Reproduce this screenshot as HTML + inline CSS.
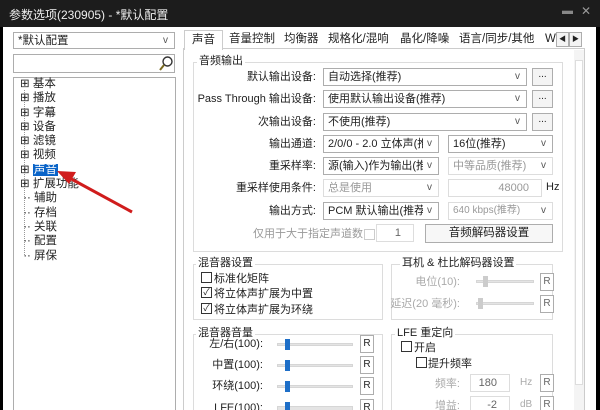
<!DOCTYPE html>
<html style="overflow:hidden;height:410px"><head><meta charset="utf-8"><style>
*{margin:0;padding:0;box-sizing:border-box}
body{width:600px;height:410px;overflow:hidden;background:#000;font-family:"Liberation Sans","Noto Sans CJK SC",sans-serif;font-size:11px;color:#222;position:relative}
.a{position:absolute;white-space:nowrap}
.box{position:absolute;border:1px solid #adadad;background:#fff}
.cb{position:absolute;border:1px solid #adadad;background:#fff;height:18px;font-size:11px;line-height:16px;padding-left:4px;white-space:nowrap;overflow:hidden}
.cb .v{position:absolute;right:0;top:0;font-size:10px;color:#555;background:#fff;padding:0 6px 0 4px}
.dis{color:#999;border-color:#ddd}
.btn{position:absolute;border:1px solid #adadad;background:#f4f4f4;text-align:center;font-size:10px;white-space:nowrap}
.grp{position:absolute;border:1px solid #dcdcdc;border-bottom:none}
.gl{position:absolute;background:#fff;padding:0 2px;font-size:11px;line-height:13px;white-space:nowrap}
.lbl{position:absolute;text-align:right;font-size:11px;line-height:14px;white-space:nowrap}
.chk{position:absolute;width:11px;height:11px;border:1px solid #333;background:#fff;font-size:9px;line-height:9px;text-align:center}
.sl{position:absolute;height:3px;background:#e4e4e4;border:1px solid #d6d6d6}
.th{position:absolute;width:5px;height:11px;background:#1e6fc8}
.thd{background:#ccc}
.r{position:absolute;width:14px;height:18px;border:1px solid #adadad;background:#fff;font-size:10px;text-align:center;line-height:16px}
</style></head><body>
<div class="a" style="left:0;top:0;width:600px;height:27px;background:#1c1c1c"></div>
<div class="a" style="left:9px;top:6px;color:#eee;font-size:12px">参数选项(230905) - *默认配置</div>
<div class="a" style="left:562px;top:5px;color:#888;font-size:11px">▬</div>
<div class="a" style="left:581px;top:4px;color:#999;font-size:12px">✕</div>
<div class="a" style="left:3px;top:27px;width:593px;height:383px;background:#fff"></div>

<div class="cb" style="left:13px;top:32px;width:162px;height:17px;font-size:11.5px">*默认配置<span class="v">v</span></div>
<div class="box" style="left:13px;top:54px;width:162px;height:19px"></div>
<svg class="a" style="left:158px;top:55px" width="16" height="17"><circle cx="9.5" cy="6.5" r="4.5" fill="none" stroke="#333" stroke-width="1.4"/><line x1="6" y1="10" x2="2" y2="15" stroke="#7a6a20" stroke-width="2"/></svg>
<div class="box" style="left:13px;top:77px;width:163px;height:333px;border-bottom:none"></div>
<div class="a" style="left:24px;top:90px;height:165px;border-left:1px dotted #999"></div>
<div style="position:absolute;left:20px;top:77px;font-size:11.5px;line-height:14.3px;white-space:nowrap">
<div>⊞ 基本</div><div>⊞ 播放</div><div>⊞ 字幕</div><div>⊞ 设备</div><div>⊞ 滤镜</div><div>⊞ 视频</div><div>⊞ <span style="background:#0a64c8;color:#fff;padding:0 1px">声音</span></div><div>⊞ 扩展功能</div><div>&nbsp;·· 辅助</div><div>&nbsp;·· 存档</div><div>&nbsp;·· 关联</div><div>&nbsp;·· 配置</div><div>&nbsp;·· 屏保</div>
</div>
<svg class="a" style="left:0;top:0" width="200" height="260"><line x1="132" y1="212" x2="64" y2="175" stroke="#d01c1c" stroke-width="3"/><polygon points="57,171 76,172 69,184" fill="#d01c1c"/></svg>

<div class="a" style="left:183px;top:48px;width:402px;height:362px;border:1px solid #ccc;border-bottom:none;background:#fff"></div>
<div class="a" style="left:184px;top:30px;width:39px;height:20px;border:1px solid #ccc;border-bottom:none;background:#fff;text-align:center;line-height:18px;font-size:11.5px">声音</div>
<div class="a" style="left:229px;top:32px;line-height:14px;font-size:11.5px">音量控制</div>
<div class="a" style="left:284px;top:32px;line-height:14px;font-size:11.5px">均衡器</div>
<div class="a" style="left:328px;top:32px;line-height:14px;font-size:11.5px">规格化/混响</div>
<div class="a" style="left:400px;top:32px;line-height:14px;font-size:11.5px">晶化/降噪</div>
<div class="a" style="left:459px;top:32px;line-height:14px;font-size:11.5px">语言/同步/其他</div>
<div class="a" style="left:545px;top:32px;line-height:14px;font-size:11.5px">Wi</div>
<div class="btn" style="left:556px;top:32px;width:13px;height:15px;font-size:7px;line-height:13px">◀</div>
<div class="btn" style="left:569px;top:32px;width:13px;height:15px;font-size:7px;line-height:13px">▶</div>
<div class="a" style="left:574px;top:50px;width:10px;height:360px;background:#f4f4f4"></div>
<div class="a" style="left:575px;top:60px;width:8px;height:325px;background:#fff;border:1px solid #ddd"></div>

<div class="grp" style="left:193px;top:62px;width:370px;height:190px;border-bottom:1px solid #dcdcdc"></div>
<div class="gl" style="left:197px;top:55px">音频输出</div>
<div class="lbl" style="left:200px;top:70px;width:116px">默认输出设备:</div>
<div class="cb" style="left:323px;top:68px;width:204px">自动选择(推荐)<span class="v">v</span></div>
<div class="btn" style="left:532px;top:68px;width:21px;height:18px">...</div>
<div class="lbl" style="left:190px;top:92px;width:126px">Pass Through 输出设备:</div>
<div class="cb" style="left:323px;top:90px;width:204px">使用默认输出设备(推荐)<span class="v">v</span></div>
<div class="btn" style="left:532px;top:90px;width:21px;height:18px">...</div>
<div class="lbl" style="left:200px;top:115px;width:116px">次输出设备:</div>
<div class="cb" style="left:323px;top:113px;width:204px">不使用(推荐)<span class="v">v</span></div>
<div class="btn" style="left:532px;top:113px;width:21px;height:18px">...</div>
<div class="lbl" style="left:200px;top:137px;width:116px">输出通道:</div>
<div class="cb" style="left:323px;top:135px;width:116px">2/0/0 - 2.0 立体声(推荐<span class="v">v</span></div>
<div class="cb" style="left:448px;top:135px;width:105px">16位(推荐)<span class="v">v</span></div>
<div class="lbl" style="left:200px;top:159px;width:116px">重采样率:</div>
<div class="cb" style="left:323px;top:157px;width:116px">源(输入)作为输出(推荐<span class="v">v</span></div>
<div class="cb dis" style="left:448px;top:157px;width:105px">中等品质(推荐)<span class="v">v</span></div>
<div class="lbl" style="left:200px;top:181px;width:116px">重采样使用条件:</div>
<div class="cb dis" style="left:323px;top:179px;width:116px">总是使用<span class="v">v</span></div>
<div class="cb dis" style="left:448px;top:179px;width:94px;text-align:right;padding-right:12px">48000</div>
<div class="a" style="left:546px;top:181px;font-size:11px">Hz</div>
<div class="lbl" style="left:200px;top:204px;width:116px">输出方式:</div>
<div class="cb" style="left:323px;top:202px;width:116px">PCM 默认输出(推荐)<span class="v">v</span></div>
<div class="cb dis" style="left:448px;top:202px;width:105px;font-size:10px">640 kbps(推荐)<span class="v">v</span></div>
<div class="lbl" style="left:220px;top:227px;width:143px;color:#999">仅用于大于指定声道数</div>
<div class="chk" style="left:364px;top:229px;border-color:#ccc"></div>
<div class="cb dis" style="left:376px;top:224px;width:38px;text-align:right;padding-right:12px;color:#666">1</div>
<div class="btn" style="left:425px;top:224px;width:128px;height:19px;font-size:11.5px;line-height:17px;background:#f7f7f7">音频解码器设置</div>

<div class="grp" style="left:193px;top:264px;width:190px;height:56px;border-bottom:1px solid #dcdcdc"></div>
<div class="gl" style="left:196px;top:257px">混音器设置</div>
<div class="chk" style="left:201px;top:272px"></div><div class="a" style="left:214px;top:270px">标准化矩阵</div>
<div class="chk" style="left:201px;top:287px">✓</div><div class="a" style="left:214px;top:285px">将立体声扩展为中置</div>
<div class="chk" style="left:201px;top:303px">✓</div><div class="a" style="left:214px;top:301px">将立体声扩展为环绕</div>

<div class="grp" style="left:391px;top:264px;width:162px;height:56px;border-bottom:1px solid #dcdcdc"></div>
<div class="gl" style="left:400px;top:257px">耳机 &amp; 杜比解码器设置</div>
<div class="lbl" style="left:400px;top:275px;width:60px;color:#aaa">电位(10):</div>
<div class="sl" style="left:476px;top:280px;width:58px"></div><div class="th thd" style="left:483px;top:276px"></div>
<div class="r" style="left:540px;top:273px;color:#666">R</div>
<div class="lbl" style="left:390px;top:297px;width:70px;color:#aaa">延迟(20 毫秒):</div>
<div class="sl" style="left:476px;top:302px;width:58px"></div><div class="th thd" style="left:478px;top:298px"></div>
<div class="r" style="left:540px;top:295px;color:#666">R</div>

<div class="grp" style="left:193px;top:334px;width:190px;height:76px"></div>
<div class="gl" style="left:196px;top:327px">混音器音量</div>
<div class="grp" style="left:391px;top:334px;width:162px;height:76px"></div>
<div class="gl" style="left:395px;top:327px">LFE 重定向</div>
<div class="lbl" style="left:200px;top:337px;width:63px">左/右(100):</div>
<div class="lbl" style="left:200px;top:358px;width:63px">中置(100):</div>
<div class="lbl" style="left:200px;top:379px;width:63px">环绕(100):</div>
<div class="lbl" style="left:200px;top:401px;width:63px">LFE(100):</div>
<div class="sl" style="left:277px;top:343px;width:76px"></div><div class="th" style="left:285px;top:339px"></div>
<div class="sl" style="left:277px;top:364px;width:76px"></div><div class="th" style="left:285px;top:360px"></div>
<div class="sl" style="left:277px;top:385px;width:76px"></div><div class="th" style="left:285px;top:381px"></div>
<div class="sl" style="left:277px;top:406px;width:76px;height:4px;border-bottom:none"></div><div class="th" style="left:285px;top:402px;height:8px"></div>
<div class="r" style="left:360px;top:335px">R</div>
<div class="r" style="left:360px;top:356px">R</div>
<div class="r" style="left:360px;top:377px">R</div>
<div class="r" style="left:360px;top:399px;height:11px;border-bottom:none">R</div>
<div class="chk" style="left:401px;top:341px"></div><div class="a" style="left:414px;top:339px">开启</div>
<div class="chk" style="left:416px;top:357px"></div><div class="a" style="left:428px;top:355px">提升频率</div>
<div class="lbl" style="left:420px;top:377px;width:40px;color:#aaa">频率:</div>
<div class="cb dis" style="left:470px;top:374px;width:40px;text-align:right;padding-right:12px;color:#666">180</div>
<div class="a" style="left:520px;top:377px;color:#aaa;font-size:10px">Hz</div>
<div class="r" style="left:540px;top:374px;color:#666">R</div>
<div class="lbl" style="left:420px;top:399px;width:40px;color:#aaa">增益:</div>
<div class="cb dis" style="left:470px;top:396px;width:40px;height:14px;border-bottom:none;text-align:right;padding-right:12px;color:#666">-2</div>
<div class="a" style="left:520px;top:399px;color:#aaa;font-size:10px">dB</div>
<div class="r" style="left:540px;top:396px;height:14px;border-bottom:none;color:#666">R</div>
</body></html>
